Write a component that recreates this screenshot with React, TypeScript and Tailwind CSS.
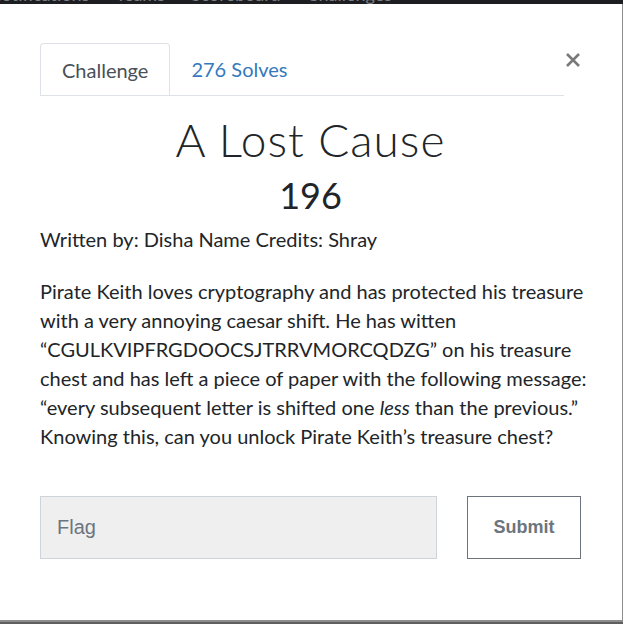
const navItems = ['Notifications', 'Teams', 'Scoreboard', 'Challenges'];

const description = [
  'Pirate Keith loves cryptography and has protected his treasure',
  'with a very annoying caesar shift. He has witten',
  '\u201cCGULKVIPFRGDOOCSJTRRVMORCQDZG\u201d on his treasure',
  'chest and has left a piece of paper with the following message:',
];

export default function App() {
  return (
    <div className="w-[623px] h-[624px] bg-[#1c1e21] overflow-hidden flex flex-col font-['Lato',sans-serif]">
      {/* navbar peeking out behind the modal */}
      <div className="h-[4px] overflow-hidden shrink-0">
        <div className="-mt-[17px] -ml-[12px] flex gap-[26px] text-[18px] leading-[22px] text-[#7d7f82]">
          {navItems.map((item) => (
            <span key={item}>{item}</span>
          ))}
        </div>
      </div>

      <div className="w-[623px] h-[618px] shrink-0 bg-white border-r border-b-2 border-[#8d8d8d] pl-[40px] pr-[41px] pt-[39px]">
        <div className="flex items-start">
          <div className="flex-1 flex border-b border-[#dee2e6] text-[20px]">
            <div className="h-[52px] px-[21px] flex items-center border border-b-0 border-[#dee2e6] rounded-t-[4px] text-[#495057] -mb-px bg-white">
              Challenge
            </div>
            <div className="h-[52px] px-[21px] flex items-center text-[#3579bd]">276 Solves</div>
          </div>
          <button className="w-[16px] h-[16px] mt-[9px] ml-[1px] text-[#7a7a7a]">
            <svg viewBox="0 0 16 16" className="w-[16px] h-[16px]">
              <path d="M2 2 L14 14 M14 2 L2 14" stroke="currentColor" strokeWidth="2.6" strokeLinecap="butt" />
            </svg>
          </button>
        </div>

        <h2 className="mt-[17px] text-center text-[46px] leading-[54px] font-light tracking-[1px] text-[#212529]">
          A Lost Cause
        </h2>
        <h3 className="mt-[6px] text-center text-[36px] leading-[44px] text-[#212529]">196</h3>

        <p className="mt-[8px] text-[20px] leading-[29px] text-[#212529]">
          Written by: Disha Name Credits: Shray
        </p>

        <p className="mt-[23px] text-[20px] leading-[29px] text-[#212529] whitespace-nowrap">
          {description.map((line) => (
            <span key={line}>
              {line}
              <br />
            </span>
          ))}
          {'\u201cevery subsequent letter is shifted one '}
          <em>less</em>
          {' than the previous.\u201d'}
          <br />
          Knowing this, can you unlock Pirate Keith{'\u2019'}s treasure chest?
        </p>

        <div className="mt-[45px] flex gap-[30px]">
          <input
            placeholder="Flag"
            className="w-[397px] h-[63px] bg-[#efefef] border border-[#ced4da] px-[16px] text-[20px] font-['Liberation_Sans',sans-serif] placeholder:text-[#6c757d] outline-none"
          />
          <button className="w-[114px] h-[63px] border border-[#6c757d] text-[#6c757d] text-[18px] font-bold font-['Liberation_Sans',sans-serif]">
            Submit
          </button>
        </div>
      </div>
      <div className="flex-1 bg-[#5e5e5e]" />
    </div>
  );
}
